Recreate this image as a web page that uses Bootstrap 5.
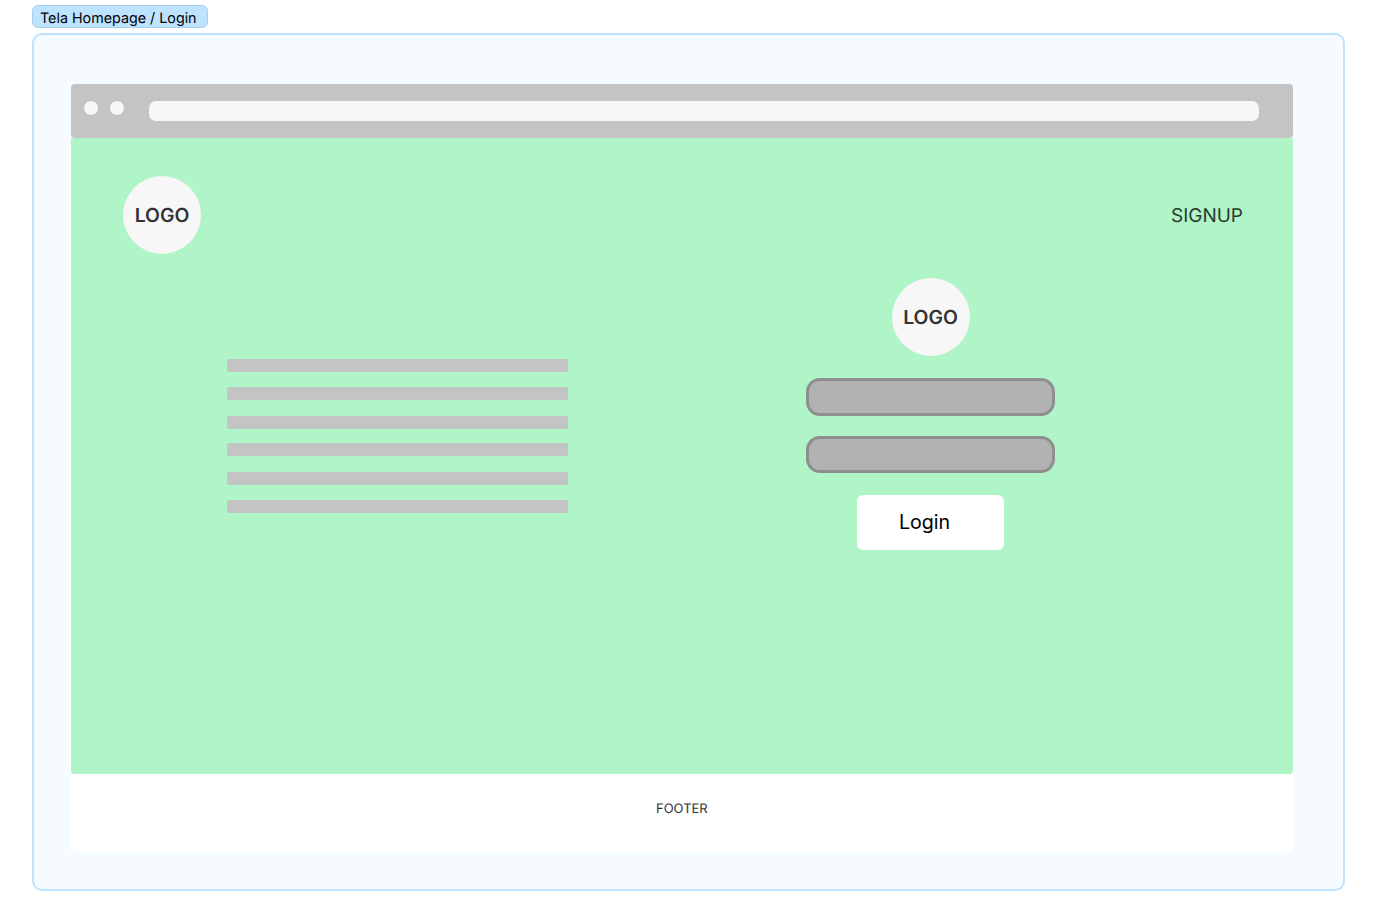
<!DOCTYPE html>
<html lang="en">
<head>
<meta charset="utf-8">
<title>Tela Homepage / Login</title>
<link href="https://cdn.jsdelivr.net/npm/bootstrap@5.3.0/dist/css/bootstrap.min.css" rel="stylesheet">
<style>
html, body { height: 923px; overflow: hidden; }
body { background: #fff; font-family: Inter, "Liberation Sans", sans-serif; padding: 5px 0 0 32px; text-rendering: geometricPrecision; }
.frame-tag { width: 176px; height: 23px; background: #bde3ff; border: 1px solid #a5d0ee; border-radius: 6px; font-size: 14.3px; line-height: 23px; padding: 1px 0 0 7px; color: #000; margin-bottom: 5px; }
.frame-box { width: 1313px; height: 858px; background: #f5fbff; border: 2px solid #bde3ff; border-radius: 10px; padding: 49px 50px 0 37px; }
.win-bar { height: 54px; background: #c4c4c4; border-radius: 4px; padding: 0 34px 0 13px; }
.win-dot { width: 14px; height: 14px; border-radius: 50%; background: #f7f7f7; margin-right: 12px; margin-top: -6px; }
.win-url { height: 20px; background: #f7f7f7; border-radius: 7px; margin-left: 13px; margin-top: -1px; }
.win-main { height: 636px; background: #aff5c7; border-radius: 0 0 4px 4px; }
.win-head { padding: 38px 50px 0 52px; }
.logo-disc { width: 78px; height: 78px; border-radius: 50%; background: #f7f7f7; color: #333; font-weight: 600; font-size: 19.4px; padding-top: 1px; }
.signup-link { color: #2b3a30; font-size: 19px; line-height: 24px; margin-top: 28px; }
.copy-col { width: 341px; margin-left: 156px; padding-top: 105px; }
.copy-line { height: 13px; background: #c4c4c4; border-radius: 2px; }
.gap-a { margin-bottom: 15px; }
.gap-b { margin-bottom: 16px; }
.gap-c { margin-bottom: 14px; }
.login-col { width: 249px; margin-left: 238px; padding-top: 24px; }
.login-field { width: 249px; height: 38px; background: #b2b2b2; border: 3px solid #8f8f8f; border-radius: 14px; }
.field-one { margin-top: 22px; margin-bottom: 20px; }
.field-two { height: 37px; margin-bottom: 22px; }
.login-btn { width: 147px; height: 55px; background: #fff; border: 0; border-radius: 6px; color: #000; font-size: 19.6px; padding: 0 12px 0 0; }
.win-foot { height: 78px; background: #fff; border-radius: 0 0 4px 4px; font-size: 13px; color: #333; padding: 27px 0 0 585px; line-height: 16px; }
</style>
</head>
<body>
<div class="frame-tag">Tela Homepage / Login</div>
<div class="frame-box">
  <div class="win-bar d-flex align-items-center">
    <div class="win-dot flex-shrink-0"></div>
    <div class="win-dot flex-shrink-0"></div>
    <div class="win-url flex-grow-1"></div>
  </div>
  <div class="win-main">
    <div class="win-head d-flex justify-content-between align-items-start">
      <div class="logo-disc d-flex align-items-center justify-content-center">LOGO</div>
      <a class="signup-link text-decoration-none" href="#">SIGNUP</a>
    </div>
    <div class="d-flex align-items-start">
      <div class="copy-col">
        <div class="copy-line gap-a"></div>
        <div class="copy-line gap-b"></div>
        <div class="copy-line gap-c"></div>
        <div class="copy-line gap-b"></div>
        <div class="copy-line gap-a"></div>
        <div class="copy-line"></div>
      </div>
      <div class="login-col d-flex flex-column align-items-center">
        <div class="logo-disc d-flex align-items-center justify-content-center">LOGO</div>
        <div class="login-field field-one"></div>
        <div class="login-field field-two"></div>
        <button class="login-btn btn" type="button">Login</button>
      </div>
    </div>
  </div>
  <div class="win-foot">FOOTER</div>
</div>
<script src="https://cdn.jsdelivr.net/npm/bootstrap@5.3.0/dist/js/bootstrap.bundle.min.js"></script>
</body>
</html>
